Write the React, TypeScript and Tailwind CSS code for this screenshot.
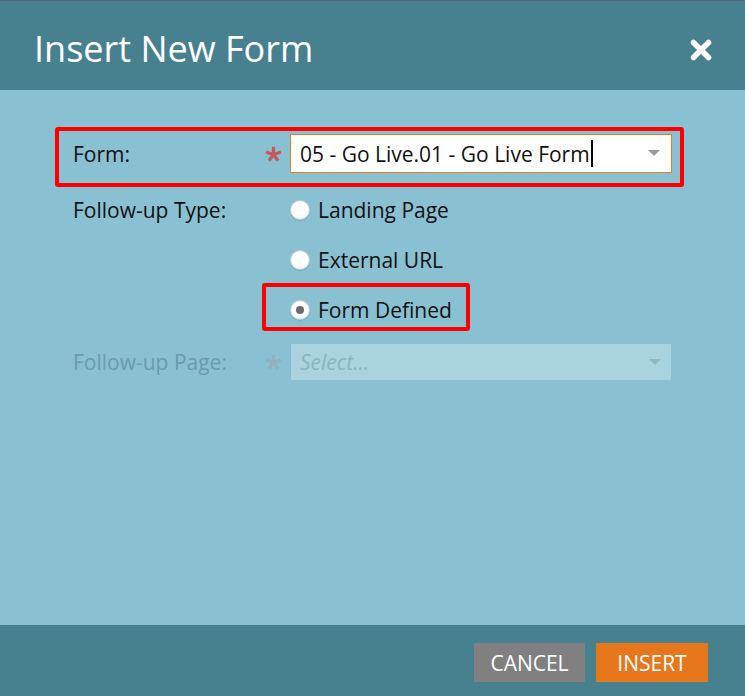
import React from "react";

const font = { fontFamily: '"Open Sans", "Noto Sans", sans-serif' };

function Asterisk({ color }: { color: string }) {
  const arms = [-90, -18, 54, 126, 198];
  return (
    <svg width="17" height="16" viewBox="-8.5 -8 17 16" className="block">
      {arms.map((a) => {
        const r = (a * Math.PI) / 180;
        return (
          <line
            key={a}
            x1={0}
            y1={0.5}
            x2={Math.cos(r) * 7.8}
            y2={0.5 + Math.sin(r) * 7.8}
            stroke={color}
            strokeWidth={3.2}
            strokeLinecap="butt"
          />
        );
      })}
    </svg>
  );
}

function Triangle({ color }: { color: string }) {
  return (
    <svg width="12" height="6" viewBox="0 0 12 6" className="block">
      <polygon points="0,0 12,0 6,6" fill={color} />
    </svg>
  );
}

function Radio({ checked, label }: { checked?: boolean; label: string }) {
  return (
    <div className="flex items-center h-[26px]">
      <span className="relative w-[20px] h-[20px] rounded-full border border-[#c4cdd1] bg-[radial-gradient(circle_at_50%_40%,#ffffff_45%,#e6e9eb_100%)] shadow-[0_1px_1px_rgba(0,0,0,0.15)] flex items-center justify-center">
        {checked && <span className="w-[8px] h-[8px] rounded-full bg-[#6b6b6b]" />}
      </span>
      <span className="ml-[8px] text-[21px] leading-[26px] text-[#111111]">{label}</span>
    </div>
  );
}

export default function App() {
  return (
    <div className="w-[745px] h-[696px] flex flex-col bg-[#89c1d3] overflow-hidden" style={font}>
      {/* Header */}
      <div className="h-[90px] shrink-0 border-t border-[#56606f] bg-[#47808f] flex justify-between pl-[34px] pr-[33px]">
        <div className="pt-[30px] text-[36px] leading-[35px] text-white">Insert New Form</div>
        <div className="pt-[38px]">
          <svg width="22" height="22" viewBox="0 0 22 22" className="block">
            <line x1="3.5" y1="3.5" x2="18.5" y2="18.5" stroke="#ffffff" strokeWidth="5.5" strokeLinecap="round" />
            <line x1="18.5" y1="3.5" x2="3.5" y2="18.5" stroke="#ffffff" strokeWidth="5.5" strokeLinecap="round" />
          </svg>
        </div>
      </div>

      {/* Body */}
      <div className="flex-1 flex flex-col pt-[37px]">
        {/* Row 1: Form */}
        <div className="ml-[55px] w-[629px] h-[60px] border-4 border-[#ff0000] rounded-[3px] flex items-center pl-[14px] pt-[3px] pb-[10px]">
          <div className="w-[192px] text-[21px] leading-[26px] text-[#111111]">Form:</div>
          <div className="w-[25px] flex items-center pt-[1px]">
            <Asterisk color="#c8585a" />
          </div>
          <div className="w-[382px] h-[39px] bg-white border border-[#e67e22] flex items-center pl-[9px] pr-[11px]">
            <span className="text-[21px] leading-[26px] text-[#111111]">05 - Go Live.01 - Go Live Form</span>
            <span className="ml-[1px] w-[2px] h-[27px] bg-black" />
            <span className="flex-1" />
            <span className="mb-[2px]">
              <Triangle color="#9a9a9a" />
            </span>
          </div>
        </div>

        {/* Row 2: Follow-up Type */}
        <div className="flex pl-[73px] mt-[10px]">
          <div className="w-[217px] text-[21px] leading-[26px] text-[#111111]">Follow-up Type:</div>
          <div className="flex flex-col">
            <Radio label="Landing Page" />
            <div className="mt-[24px]">
              <Radio label="External URL" />
            </div>
            <div className="mt-[10px] -ml-[28px] w-[208px] h-[48px] border-4 border-[#ff0000] rounded-[3px] flex items-center pl-[24px] pt-[6px]">
              <Radio checked label="Form Defined" />
            </div>
          </div>
        </div>

        {/* Row 3: Follow-up Page */}
        <div className="flex items-center pl-[73px] mt-[13px]">
          <div className="w-[192px] text-[21px] leading-[26px] text-[#6a9bab]">Follow-up Page:</div>
          <div className="w-[26px] flex items-center">
            <Asterisk color="#8fb2bd" />
          </div>
          <div className="w-[380px] h-[36px] bg-[#a9d3df] flex items-center pl-[9px] pr-[10px]">
            <span className="text-[21px] leading-[26px] italic text-[#8db3bf]">Select...</span>
            <span className="flex-1" />
            <Triangle color="#8fb7c3" />
          </div>
        </div>
      </div>

      {/* Footer */}
      <div className="h-[71px] shrink-0 bg-[#47808f] flex justify-end items-start pt-[18px] pr-[37px] gap-[11px]">
        <button className="w-[111px] h-[39px] bg-[#808080] text-white text-[21px] leading-[26px] flex items-center justify-center">
          CANCEL
        </button>
        <button className="w-[112px] h-[39px] bg-[#e8761a] text-white text-[21px] leading-[26px] flex items-center justify-center">
          INSERT
        </button>
      </div>
    </div>
  );
}
